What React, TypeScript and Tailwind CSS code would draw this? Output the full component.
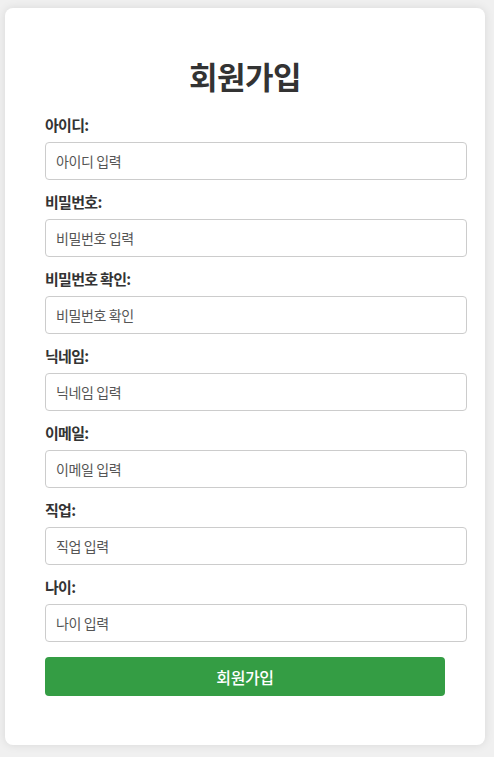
import React from "react";

const fields = [
  { label: "아이디:", placeholder: "아이디 입력", type: "text" },
  { label: "비밀번호:", placeholder: "비밀번호 입력", type: "password" },
  { label: "비밀번호 확인:", placeholder: "비밀번호 확인", type: "password" },
  { label: "닉네임:", placeholder: "닉네임 입력", type: "text" },
  { label: "이메일:", placeholder: "이메일 입력", type: "email" },
  { label: "직업:", placeholder: "직업 입력", type: "text" },
  { label: "나이:", placeholder: "나이 입력", type: "text" },
];

export default function App() {
  return (
    <div
      className="min-h-screen w-full bg-[#f0f0f0] pt-[8px] pl-[5px]"
      style={{ fontFamily: '"Noto Sans CJK KR", "Noto Sans", sans-serif' }}
    >
      <div className="w-[480px] rounded-[8px] bg-white px-[40px] pt-[40px] pb-[49px] shadow-[0_0_10px_rgba(0,0,0,0.1)]">
        <h2 className="mb-[9px] h-[56px] text-center text-[31px] font-bold leading-[56px] tracking-[-0.5px] text-[#333]">
          회원가입
        </h2>
        {fields.map((f) => (
          <div key={f.label} className="mb-[10px]">
            <label className="mb-[5px] block text-[15px] font-bold leading-[24px] tracking-[-0.7px] text-[#333]">
              {f.label}
            </label>
            <input
              type={f.type}
              placeholder={f.placeholder}
              className="box-content block h-[16px] w-[400px] rounded-[4px] border border-[#cccccc] bg-white px-[10px] py-[10px] text-[14px] leading-[16px] tracking-[-0.4px] text-[#333] placeholder:text-[#555] outline-none"
            />
          </div>
        ))}
        <button className="mt-[15px] block h-[39px] w-[400px] rounded-[4px] bg-[#349d44] text-[16px] font-medium tracking-[-0.4px] text-white">
          회원가입
        </button>
      </div>
    </div>
  );
}
